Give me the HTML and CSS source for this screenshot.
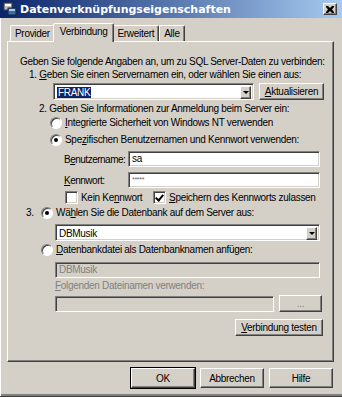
FILE: index.html
```html
<!DOCTYPE html>
<html lang="de">
<head>
    <meta charset="UTF-8">
    <title>Datenverknüpfungseigenschaften</title>
    <link rel="stylesheet" href="styles.css">
</head>
<body>
    <div class="window">
        <div class="titlebar">
            <svg class="app-icon" width="14" height="14" viewBox="0 0 14 14">
                <rect x="1" y="1" width="8" height="7" fill="#c0c0c0" stroke="#404040"/>
                <rect x="2" y="2" width="6" height="2" fill="#fff"/>
                <rect x="5" y="6" width="8" height="7" fill="#3a6ea5" stroke="#202040"/>
                <rect x="6" y="7" width="6" height="2" fill="#a6caf0"/>
            </svg>
            <span class="title">Datenverknüpfungseigenschaften</span>
            <span class="close">
                <svg width="8" height="7" viewBox="0 0 8 7">
                    <path d="M0 0h2l2 2 2-2h2v1l-2 2.5 2 2.5v1h-2l-2-2-2 2h-2v-1l2-2.5-2-2.5z" fill="#000"/>
                </svg>
            </span>
        </div>

        <div class="tabs">
            <div class="tab">Provider</div>
            <div class="tab active">Verbindung</div>
            <div class="tab">Erweitert</div>
            <div class="tab">Alle</div>
        </div>

        <div class="panel">
            <p class="intro">Geben Sie folgende Angaben an, um zu SQL Server-Daten zu verbinden:</p>
            <p class="step one">1. <u>G</u>eben Sie einen Servernamen ein, oder wählen Sie einen aus:</p>
            <div class="row server">
                <div class="combo">
                    <span class="value"><span class="selected">FRANK</span></span>
                    <span class="drop"></span>
                </div>
                <button class="btn refresh"><u>A</u>ktualisieren</button>
            </div>

            <p class="step two">2. Geben Sie Informationen zur Anmeldung beim Server ein:</p>
            <div class="option first">
                <span class="radio"></span>
                <span><u>I</u>ntegrierte Sicherheit von Windows NT verwenden</span>
            </div>
            <div class="option second">
                <span class="radio checked"></span>
                <span>Spe<u>z</u>ifischen Benutzernamen und Kennwort verwenden:</span>
            </div>
            <div class="field user">
                <label>B<u>e</u>nutzername:</label>
                <div class="input">sa</div>
            </div>
            <div class="field pass">
                <label><u>K</u>ennwort:</label>
                <div class="input masked">*****</div>
            </div>
            <div class="checks">
                <div class="check-item no-pass">
                    <span class="checkbox"></span>
                    <span>Kein Ke<u>n</u>nwort</span>
                </div>
                <div class="check-item">
                    <span class="checkbox checked"></span>
                    <span><u>S</u>peichern des Kennworts zulassen</span>
                </div>
            </div>

            <div class="option three">
                <span class="num">3.</span>
                <span class="radio checked"></span>
                <span>Wä<u>h</u>len Sie die Datenbank auf dem Server aus:</span>
            </div>
            <div class="combo db">
                <span class="value">DBMusik</span>
                <span class="drop"></span>
            </div>
            <div class="option attach">
                <span class="radio"></span>
                <span><u>D</u>atenbankdatei als Datenbanknamen anfügen:</span>
            </div>
            <div class="input disabled wide">DBMusik</div>
            <p class="muted"><u>F</u>olgenden Dateinamen verwenden:</p>
            <div class="row file">
                <div class="input disabled"></div>
                <button class="btn browse" disabled>...</button>
            </div>
            <div class="row test">
                <button class="btn test-btn"><u>V</u>erbindung testen</button>
            </div>
        </div>

        <div class="footer">
            <button class="btn default">OK</button>
            <button class="btn">Abbrechen</button>
            <button class="btn">Hilfe</button>
        </div>
    </div>
</body>
</html>
```

FILE: styles.css
```css
body {
    margin: 0;
    background-color: #d4d0c8;
    font-family: "Liberation Sans", Arial, sans-serif;
    font-size: 10px;
    letter-spacing: -0.3px;
    color: #000;
}
.window {
    width: 342px;
    height: 397px;
    box-sizing: border-box;
    background-color: #d4d0c8;
    border-bottom: 1px solid #404040;
    box-shadow: inset 1px 0 #fff, inset 0 -2px #808080;
    display: flex;
    flex-direction: column;
}
.titlebar {
    height: 18px;
    display: flex;
    align-items: center;
    padding: 0 5px 0 3px;
    background: linear-gradient(to right, #0a246a, #a6caf0);
    color: #fff;
}
.app-icon {
    margin-right: 3px;
}
.title {
    font-family: "DejaVu Sans", sans-serif;
    font-weight: bold;
    font-size: 11px;
    letter-spacing: 0;
    flex: 1;
}
.close {
    width: 14px;
    height: 12px;
    box-sizing: border-box;
    background-color: #d4d0c8;
    border: 1px solid;
    border-color: #fff #404040 #404040 #fff;
    box-shadow: inset -1px -1px #808080;
    display: flex;
    align-items: center;
    justify-content: center;
}

/* Reiter */
.tabs {
    display: flex;
    align-items: flex-end;
    height: 23px;
    padding-left: 10px;
}
.tab {
    height: 16px;
    line-height: 15px;
    padding: 0 4px;
    box-sizing: border-box;
    border: 1px solid;
    border-bottom: none;
    border-color: #fff #404040 transparent #fff;
    box-shadow: inset -1px 0 #808080;
    border-radius: 2px 2px 0 0;
}
.tab.active {
    height: 19px;
    line-height: 16px;
    padding: 0 6px;
    margin: 0 -2px -1px;
    position: relative;
    background-color: #d4d0c8;
    z-index: 1;
}

.panel {
    margin: 0 8px 0 7px;
    height: 321px;
    box-sizing: border-box;
    border: 1px solid;
    border-color: #fff #404040 #404040 #fff;
    box-shadow: inset -1px -1px #808080;
    padding: 13px 0 0 12px;
}
p {
    margin: 0;
    line-height: 13px;
    white-space: nowrap;
}
u {
    text-decoration: underline;
}
.step.one {
    margin-left: 9px;
}
.step.two {
    margin-left: 19px;
    margin-top: 2px;
}
.row {
    display: flex;
    align-items: center;
}
.server {
    margin: 2px 0 0 33px;
}

/* Kombinationsfeld */
.combo {
    display: flex;
    height: 17px;
    box-sizing: border-box;
    background-color: #fff;
    border: 1px solid;
    border-color: #808080 #fff #fff #808080;
    box-shadow: inset 1px 1px #404040, inset -1px -1px #d4d0c8;
    padding: 2px;
}
.server .combo {
    width: 201px;
}
.combo .value {
    flex: 1;
    line-height: 13px;
    padding-left: 1px;
}
.selected {
    background-color: #0a246a;
    color: #fff;
    padding: 0 1px;
}
.drop {
    width: 11px;
    height: 13px;
    box-sizing: border-box;
    background-color: #d4d0c8;
    border: 1px solid;
    border-color: #fff #404040 #404040 #fff;
    box-shadow: inset -1px -1px #808080;
    position: relative;
}
.drop::after {
    content: "";
    position: absolute;
    left: 2px;
    top: 4px;
    border: 3px solid transparent;
    border-top: 3px solid #000;
    border-bottom: none;
}

/* Schaltflächen */
.btn {
    font-family: inherit;
    font-size: 10px;
    letter-spacing: inherit;
    color: #000;
    background-color: #d4d0c8;
    border: 1px solid;
    border-color: #fff #404040 #404040 #fff;
    box-shadow: inset -1px -1px #808080;
    padding: 0;
    height: 17px;
    box-sizing: border-box;
}
.refresh {
    width: 65px;
    margin-left: 5px;
}

/* Optionsfelder */
.option {
    display: flex;
    align-items: center;
    height: 13px;
    margin-left: 30px;
    white-space: nowrap;
}
.option.first {
    margin-top: 1px;
}
.option.second {
    margin-top: 4px;
}
.radio {
    width: 12px;
    height: 12px;
    box-sizing: border-box;
    border-radius: 50%;
    background-color: #fff;
    border: 1px solid;
    border-color: #808080 #fff #fff #808080;
    box-shadow: inset 1px 1px #404040;
    margin-right: 3px;
    position: relative;
    flex-shrink: 0;
}
.radio.checked::after {
    content: "";
    position: absolute;
    left: 3px;
    top: 3px;
    width: 4px;
    height: 4px;
    border-radius: 50%;
    background-color: #000;
}
.field {
    display: flex;
    align-items: center;
    margin: 5px 0 0 44px;
}
.field.pass {
    margin-top: 5px;
}
.field label {
    width: 64px;
    letter-spacing: -0.5px;
    white-space: nowrap;
}
.input {
    height: 16px;
    box-sizing: border-box;
    background-color: #fff;
    border: 1px solid;
    border-color: #808080 #fff #fff #808080;
    box-shadow: inset 1px 1px #404040, inset -1px -1px #d4d0c8;
    padding: 0 3px;
    line-height: 14px;
    white-space: nowrap;
}
.field .input {
    width: 192px;
}
.masked {
    font-size: 7px;
    color: #666;
}
.checks {
    display: flex;
    margin: 3px 0 0 45px;
}
.check-item {
    display: flex;
    align-items: center;
    white-space: nowrap;
}
.no-pass {
    width: 88px;
}
.checkbox {
    width: 13px;
    height: 13px;
    box-sizing: border-box;
    background-color: #fff;
    border: 1px solid;
    border-color: #808080 #fff #fff #808080;
    box-shadow: inset 1px 1px #404040, inset -1px -1px #d4d0c8;
    margin-right: 3px;
    position: relative;
}
.checkbox.checked::after {
    content: "";
    position: absolute;
    left: 3px;
    top: 1px;
    width: 3px;
    height: 6px;
    border: solid #000;
    border-width: 0 2px 2px 0;
    transform: rotate(40deg);
}
.option.three {
    margin: 2px 0 0 6px;
}
.num {
    width: 15px;
}
.combo.db {
    margin: 5px 0 0 35px;
    width: 265px;
}
.option.attach {
    margin: 2px 0 0 21px;
}
.input.disabled {
    background-color: #d4d0c8;
    color: #808080;
}
.wide {
    margin: 6px 0 0 35px;
    width: 265px;
}
.muted {
    color: #808080;
    margin: 1px 0 0 35px;
}
.file {
    margin: 3px 0 0 35px;
}
.file .input {
    width: 219px;
}
.browse {
    width: 43px;
    height: 17px;
    margin-left: 5px;
    color: #808080;
}
.test {
    justify-content: flex-end;
    margin: 7px 10px 0 0;
}
.test-btn {
    width: 88px;
}

.footer {
    display: flex;
    justify-content: flex-end;
    gap: 5px;
    padding: 6px 9px 0 0;
}
.footer .btn {
    width: 64px;
    height: 20px;
}
.footer .default {
    outline: 1px solid #000;
}
```
